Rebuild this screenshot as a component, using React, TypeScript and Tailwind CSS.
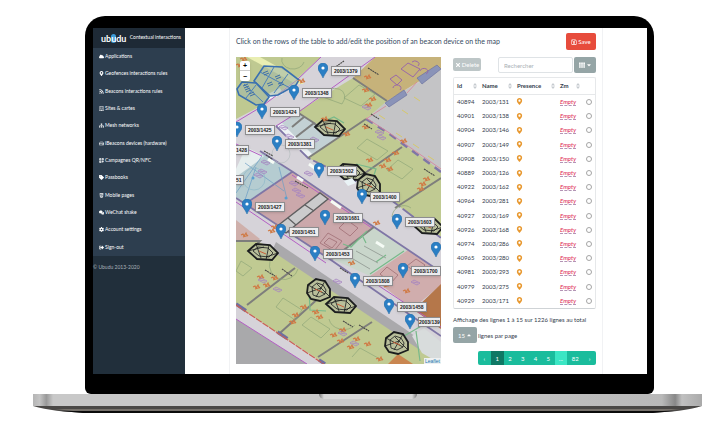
import React from 'react';
import {
  FaCaretDown,
  FaCaretUp,
  FaCloud,
  FaCog,
  FaComments,
  FaHtml5,
  FaMapMarkerAlt,
  FaQrcode,
  FaRegBuilding,
  FaRegHdd,
  FaRegSave,
  FaRss,
  FaSignOutAlt,
  FaSitemap,
  FaTag,
  FaTh,
  FaTimes,
} from 'react-icons/fa';

const menu = [
  { label: 'Applications', icon: <FaCloud /> },
  { label: 'Geofences interactions rules', icon: <FaMapMarkerAlt /> },
  { label: 'Beacons interactions rules', icon: <FaRss /> },
  { label: 'Sites & cartes', icon: <FaRegBuilding /> },
  { label: 'Mesh networks', icon: <FaSitemap /> },
  { label: 'iBeacons devices (hardware)', icon: <FaRegHdd /> },
  { label: 'Campagnes QR/NFC', icon: <FaQrcode /> },
  { label: 'Passbooks', icon: <FaTag /> },
  { label: 'Mobile pages', icon: <FaHtml5 /> },
  { label: 'WeChat shake', icon: <FaComments /> },
  { label: 'Account settings', icon: <FaCog /> },
  { label: 'Sign-out', icon: <FaSignOutAlt /> },
];

const beacons = [
  { id: '40894', name: '2003/131' },
  { id: '40901', name: '2003/138' },
  { id: '40904', name: '2003/146' },
  { id: '40907', name: '2003/149' },
  { id: '40908', name: '2003/150' },
  { id: '40889', name: '2003/126' },
  { id: '40922', name: '2003/162' },
  { id: '40964', name: '2003/281' },
  { id: '40927', name: '2003/169' },
  { id: '40926', name: '2003/168' },
  { id: '40974', name: '2003/286' },
  { id: '40965', name: '2003/280' },
  { id: '40981', name: '2003/293' },
  { id: '40979', name: '2003/275' },
  { id: '40929', name: '2003/171' },
];

// x / y is the centre of the pin's head on the floor plan
const pins = [
  { x: 87, y: 12, label: '2003/1379' },
  { x: 58, y: 34, label: '2003/1348' },
  { x: 26, y: 53, label: '2003/1424' },
  { x: 1, y: 71, label: '2003/1425' },
  { x: 41, y: 85, label: '2003/1381' },
  { x: 83, y: 112, label: '2003/1502' },
  { x: 126, y: 138, label: '2003/1400' },
  { x: 11, y: 148, label: '2003/1427' },
  { x: 89, y: 159, label: '2003/1681' },
  { x: 161, y: 163, label: '2003/1603' },
  { x: 45, y: 173, label: '2003/1451' },
  { x: 200, y: 191, label: '' },
  { x: 79, y: 195, label: '2003/1453' },
  { x: 167, y: 212, label: '2003/1700' },
  { x: 119, y: 222, label: '2003/1808' },
  { x: 153, y: 248, label: '2003/1458' },
  { x: 174, y: 263, label: '2003/139', edge: true },
];

// labels whose pin is left of the visible area
const edgeLabels = [
  { y: 88, label: '1428' },
  { y: 118, label: '51' },
];

const stairs = [
  { x: 94, y: 71, wide: true },
  { x: 114, y: 115, wide: true },
  { x: 133, y: 128, wide: false },
  { x: 192, y: 169, wide: true },
  { x: 27, y: 195, wide: true },
  { x: 83, y: 233, wide: false },
  { x: 105, y: 248, wide: true },
  { x: 161, y: 286, wide: false },
];

const notes = [
  [3, 8], [7, 2], [131, 20], [132, 48], [129, 33], [136, 42], [102, 12], [88, 62], [129, 70], [110, 77], [133, 103],
  [146, 109], [151, 103], [159, 96], [153, 112], [186, 127], [190, 122], [184, 132], [167, 84], [65, 24],
  [24, 220], [20, 230], [30, 228], [38, 221], [67, 250], [59, 258], [56, 265], [83, 260], [79, 255],
  [97, 278], [104, 284], [114, 290], [120, 282], [106, 273], [131, 287], [143, 302], [140, 166],
  [35, 174], [38, 170], [149, 228], [170, 234], [115, 206], [8, 178],
];

const violetNotes = [
  [29, 105], [26, 114], [22, 118], [57, 126], [60, 133], [64, 138], [53, 79], [47, 70], [26, 223], [41, 232],
  [101, 224], [179, 225], [106, 276], [118, 286], [72, 86], [78, 82], [72, 116], [143, 75], [145, 80], [130, 50],
];

const blueNotes = [[12, 33], [16, 37], [30, 16], [42, 20], [34, 27], [45, 27], [10, 29]];

function FloorPlan() {
  return (
    <svg className="block h-full w-full" viewBox="0 0 205 307" preserveAspectRatio="xMinYMin slice" aria-hidden="true">
      <rect width="205" height="307" fill="#d6d3d9" />

      {/* outside of the building */}
      <path d="M205 12 151 44 130 62 152 76 205 115Z" fill="#c4c4c6" />
      <path d="M0 262 71 307H0Z" fill="#a9a9ab" />

      {/* rooms */}
      <path d="M0 0H85L61 22 23 50 0 62Z" fill="#bfc991" />
      <path d="M139 0H205V11L151 44 117 21Z" fill="#c6b27a" />
      <path d="M117 21 151 44 130 62 102 81 61 55Z" fill="#c0ca92" />
      <path d="M61 55 102 80 72 101 40 69Z" fill="#c3d1d4" />
      <path d="M102 80 130 62 152 76 205 114V180L186 168 148 137 72 101Z" fill="#c0ca92" />
      <path d="M0 120 26 96 56 115 9 147 0 141Z" fill="#b5ccd1" />
      <path d="M56 115 138 170 95 203 9 147Z" fill="#cba8ab" />
      <path d="M138 170 172 193 134 219 96 202Z" fill="#c9d6cb" />
      <path d="M172 193 205 215V228L176 252 134 219Z" fill="#d0adad" />
      <path d="M205 227 178 253 205 272Z" fill="#b5774a" />
      <path d="M0 163 24 182 14 193 0 184Z" fill="#cfb0ab" />
      <path d="M0 184 20 184 42 193 169 280 205 307H89L0 248Z" fill="#c0ca92" />
      <path d="M40 185 169 272 205 298V307L169 283 36 194Z" fill="#aaa9ac" />
      <path d="M176 279 188 271 205 285V307L186 296Z" fill="#d8dcdc" />
      <path d="M152 307 162 297 177 307Z" fill="#c98650" />

      {/* light strips along the facade */}
      <path d="M11 0 24 0 62 21 68 27 60 27Z" fill="#e9eeb2" />
      <path d="M32 37 44 31 47 37 31 43Z" fill="#f3f7fa" />
      <path d="M40 70 46 66 76 97 72 101Z" fill="#eef3f5" />
      <path d="M10 90 28 99 22 104 0 120V112Z" fill="#e6eeee" />

      {/* corridor outlines */}
      <g fill="none" stroke="#7f76a6" strokeWidth="1.8">
        <path d="M24 94 57 115 138 170 205 215M0 141 95 203 180 262 205 279M9 147 56 115" />
        <path d="M130 62 152 76 205 115" strokeWidth="2.4" strokeDasharray="8 6" />
        <path d="M40 69 72 101 150 139 205 181" strokeDasharray="14 3" />
      </g>
      <g fill="none" stroke="#b45fc4" strokeWidth="1">
        <path d="M85 0 61 23 25 50 0 65M139 0 64 54 40 69M0 262 71 307" />
        <path d="M26 99 0 87M136 171 56 118M0 145 90 206M134 223 205 270" />
      </g>
      <path d="M61 120 67 124M95 144 105 151M73 107 83 114M140 185 148 190M32 102 38 106" stroke="#f5fbf5" strokeWidth="3" />

      {/* partition walls */}
      <g fill="none" stroke="#7e7e7c" strokeWidth="2">
        <path d="M117 21 151 44M130 62 72 101M122 121 166 90M159 151 205 121" />
        <path d="M11 248 59 211M44 276 86 238M82 300 136 265M0 184 24 184 14 194" />
        <path d="M61 55 78 66 60 80M68 60 56 70M78 66 84 72M138 170 96 202" />
      </g>
      <path d="M0 247 89 307" stroke="#6f6fa0" strokeWidth="3.5" strokeDasharray="12 38" />
      <path d="M0 248 89 308" stroke="#cb6055" strokeWidth="1.2" strokeDasharray="7 1" />
      <g fill="#8a93b8" stroke="#666d9c" strokeWidth=".6">
        <path d="M181 21 201 8 205 12 186 27Z" />
        <path d="M149 46 168 33 171 38 153 50Z" />
      </g>
      <path d="M130 62 150 49M171 36 181 25M130 61 152 75 205 112" fill="none" stroke="#d98297" strokeWidth=".8" />

      {/* lift shafts */}
      <path d="M40 170 84 136 92 142 50 176Z" fill="#cbcbcc" stroke="#5f5f60" strokeWidth="1.4" />
      <path d="M52 161 60 168M69 148 78 154" stroke="#5f5f60" strokeWidth="1.2" />

      {/* furniture */}
      <g fill="none" stroke="#8fa679" strokeWidth=".7">
        <path d="M84 39a14 10 -30 1 1 22 8ZM108 41 123 28 139 37 125 49ZM46 1a10 8 0 0 0 22 4M121 91 131 82 152 94 141 103Z" />
        <path d="M151 113 162 103 177 112 166 122ZM40 250 47 241 66 253 59 263ZM66 268 75 260 94 272 85 281Z" />
        <path d="M116 300 124 291 144 302M34 204a14 14 0 0 0 28 8M93 262a15 13 0 0 0 26 6M0 214 5 204 16 211 7 219Z" />
        <path d="M156 160a12 12 0 0 1 19-9" />
      </g>
      <g fill="none" stroke="#a06f75" strokeWidth=".8">
        <path d="M84 186 92 176 106 184 98 194ZM88 186 93 181 101 185 96 191ZM103 171 111 163 122 171 114 179Z" />
        <path d="M144 217 151 210 162 218 155 226ZM171 209 180 202 189 208 181 216Z" />
      </g>
      <g fill="none" stroke="#9a69a8" strokeWidth="1">
        <path d="M165 12 172 6 184 12 177 20ZM154 22 160 18 166 23 161 28ZM176 5a4 3 0 1 1 6 4M157 31a4 3 0 1 1 7 2M184 14a4 3 0 1 1 6 3" />
      </g>
      <path d="M0 136 26 99M9 106 48 134M9 143 20 110M43 110 51 142" fill="none" stroke="#6b9dc4" strokeWidth=".7" />
      <circle cx="18" cy="122" r="11" fill="none" stroke="#8fb9c9" strokeWidth=".7" />
      <circle cx="45" cy="97" r="9" fill="none" stroke="#b6bfc0" strokeWidth=".7" />
      <g fill="#5a9fd0">
        <circle cx="17" cy="121" r="1.5" />
        <circle cx="50" cy="141" r="1.5" />
      </g>
      <g fill="none" stroke="#78b98a" strokeWidth="1.2">
        <path d="M131 174 115 190 107 187M126 178 130 186M168 194 134 217M140 205 150 198M163 282 187 268M180 274 184 304" />
        <path d="M73 232 74 253 90 254M120 107 140 112 138 118M84 66 98 60 108 66" />
      </g>
      <path d="M120 194 142 206M112 199 134 212M128 189 150 201" stroke="#9aa39c" strokeWidth="1" />

      {/* selected stair wells */}
      <g fill="#a4b9a6" fillOpacity=".6" stroke="#3a70b0" strokeWidth="1.6">
        <path d="M18 24 28 9 46 10 63 23 60 28 42 38 34 39Z" />
        <path d="M1 32 6 25 20 26 33 40 28 47 20 48 3 38Z" />
      </g>
      <path d="M24 15 54 31M38 10 26 31M52 17 38 36M8 27 27 45M20 28 10 41" stroke="#4a80ba" strokeWidth="1" />
      <g stroke="#3f6fa8" strokeWidth="1">
        {blueNotes.map(([x, y]) => (
          <path key={`${x}-${y}`} d={`M${x - 3} ${y}l5-2M${x - 2} ${y + 2}l5-2`} />
        ))}
      </g>

      {stairs.map((s) => (
        <g key={`${s.x}-${s.y}`} transform={`translate(${s.x} ${s.y})`} fill="none" stroke="#1b1d1e">
          {s.wide ? (
            <>
              <path d="M-15-1-7-8 7-7 15 1 9 8-6 7Z" fill="#b9bf9b" strokeWidth="1.8" />
              <path d="M-10-1-5-5 5-4 10 1 6 5-4 4ZM-7-8-2 6M6-7 3 8M-15-1 1-5M15 1 3 5" strokeWidth=".8" />
            </>
          ) : (
            <>
              <path d="M-11-5-3-11 6-9 11-1 11 7 1 11-8 9-12 3Z" fill="#b9bf9b" strokeWidth="1.8" />
              <path d="M-7-3-2-7 4-5 7 0 6 4 0 7-6 5ZM-11-5 6 4M6-9-3 7M-12 3 2-2M11 7-2-6" strokeWidth=".8" />
            </>
          )}
          <path d="M-4-1 3 2" stroke="#c9603a" strokeWidth="1" />
        </g>
      ))}
      <path d="M108 124 116 121 120 126 112 129Z" fill="#eaf3f6" />

      <g stroke="#d07a45" strokeWidth="1.2" fill="none">
        {notes.map(([x, y]) => (
          <path key={`${x}-${y}`} d={`M${x - 3} ${y}l2-1 1 2 2-3 1 3 1-1M${x - 1} ${y + 2}l3-1`} />
        ))}
      </g>
      <g stroke="#a583c0" strokeWidth=".8" fill="none">
        {violetNotes.map(([x, y]) => (
          <path key={`${x}-${y}`} d={`M${x - 4} ${y}l3-2 6 3-3 2ZM${x - 2} ${y}l5 1`} />
        ))}
      </g>
      <path d="M132 11 143 18M98 11 108 4M135 57 143 62M128 67 136 72M28 94 37 99M30 98 36 102M59 124 72 131M29 213 39 219M46 212 56 219M107 264 117 270M123 268 133 274M188 112 199 119M104 211 112 216" stroke="#4a4a48" strokeWidth="1.1" strokeDasharray="2 .6" />
      <path d="M166 53 172 57M178 40 184 44M143 58 149 62M160 76 166 80M177 87 183 91M192 99 198 103" stroke="#d6c86a" strokeWidth="1" />
    </svg>
  );
}

function Pin({ x, y, label, edge }: { x: number; y: number; label: string; edge?: boolean }) {
  return (
    <div className="absolute" style={{ left: x - 5, top: y - 6 }}>
      <svg className="block h-[15px] w-[10px]" viewBox="0 0 10 15" aria-hidden="true">
        <path d="M5 0a5 5 0 0 0-5 5c0 3 3 5 5 10 2-5 5-7 5-10a5 5 0 0 0-5-5Z" fill="#2b7fc4" stroke="#2369a5" strokeWidth=".5" />
        <circle cx="5" cy="5" r="1.6" fill="#fff" />
      </svg>
      {label && (
        <span
          className={`absolute top-[3px] left-[13px] flex h-2.5 items-center border border-[#8d8d8f] bg-[#ececee] font-['Liberation_Sans',sans-serif] text-[5px] leading-none font-bold text-[#222] shadow-sm ${
            edge ? 'border-r-0' : 'px-[2px]'
          }`}
        >
          {label}
        </span>
      )}
    </div>
  );
}

function Sidebar() {
  return (
    <aside className="flex w-[92px] shrink-0 flex-col bg-[#212f3b] text-[5px] text-white">
      <header className="flex h-5 items-center justify-between bg-[#1e2a36] pr-1 pl-2">
        <a href="#" className="flex items-center text-[9px] leading-none font-bold" aria-label="ubudu">
          ub<span className="rounded-full bg-[#3d9bd8]">u</span>du
        </a>
        <span className="whitespace-nowrap">Contextual interactions</span>
      </header>
      <nav className="grid h-[208px] auto-rows-fr bg-[#2d3e4f]">
        {menu.map((m) => (
          <a key={m.label} href="#" className="flex items-center gap-px pl-1.5 whitespace-nowrap">
            {m.icon}
            {m.label}
          </a>
        ))}
      </nav>
      <p className="mt-1.5 leading-[10px] text-[#a9b2ba]">© Ubudu 2013-2020</p>
    </aside>
  );
}

function SortIcon() {
  return (
    <svg className="h-[6px] w-1" viewBox="0 0 4 6" fill="#c5cacf" aria-hidden="true">
      <path d="M2 0 4 2.5H0ZM2 6 0 3.5h4Z" />
    </svg>
  );
}

function HeadCell({ label }: { label: string }) {
  return (
    <th className="p-0 pr-[2px] pl-[3px]">
      <div className="flex items-center justify-between">
        {label}
        <SortIcon />
      </div>
    </th>
  );
}

function BeaconTable() {
  return (
    <div className="mt-1 rounded-xs border border-[#e6e8ea] border-b-[#cfd3d6]">
      <table className="h-[230px] w-full table-fixed border-collapse text-left text-[6px] leading-none text-[#34404c]">
        <colgroup>
          <col className="w-[25px]" />
          <col className="w-[35px]" />
          <col className="w-[43px]" />
          <col className="w-[25px]" />
          <col />
        </colgroup>
        <thead>
          <tr className="h-4 border-b border-[#e6e8ea]">
            <HeadCell label="Id" />
            <HeadCell label="Name" />
            <HeadCell label="Presence" />
            <HeadCell label="Zm" />
            <th className="p-0" aria-label="Select" />
          </tr>
        </thead>
        <tbody>
          {beacons.map((b) => (
            <tr key={b.id}>
              <td className="p-0 pl-[3px]">{b.id}</td>
              <td className="p-0 pl-[3px]">{b.name}</td>
              <td className="p-0 pl-[2px]">
                <FaMapMarkerAlt className="text-[7px] text-[#e8982f]" />
              </td>
              <td className="p-0 pl-[3px]">
                <a href="#" className="border-b border-dashed border-[#b394b5] text-[#dd2551] italic">
                  Empty
                </a>
              </td>
              <td className="p-0 pl-1">
                <input
                  type="radio"
                  name="beacon"
                  aria-label={b.name}
                  className="block h-[6px] w-[6px] appearance-none rounded-full border border-[#a5a5a5] bg-white"
                />
              </td>
            </tr>
          ))}
        </tbody>
      </table>
    </div>
  );
}

function Pagination() {
  return (
    <nav className="mt-2 ml-auto flex h-3.5 w-[118px] overflow-hidden rounded-xs bg-[#1abc9c] text-[6px] text-white">
      <button className="flex-1" aria-label="Previous">‹</button>
      <button className="flex-1 bg-[#0f7864]">1</button>
      <button className="flex-1">2</button>
      <button className="flex-1">3</button>
      <button className="flex-1">4</button>
      <button className="flex-1">5</button>
      <button className="flex-1 bg-[#3be6c4]">...</button>
      <button className="w-4">82</button>
      <button className="flex-1" aria-label="Next">›</button>
    </nav>
  );
}

export default function App() {
  return (
    <div className="min-h-screen bg-white pt-4 font-[Lato,sans-serif]">
      {/* Screen */}
      <div className="mr-[69px] ml-[85px] rounded-t-[20px] rounded-b-md bg-black pt-3 pr-[7px] pb-5 pl-2">
        <div className="flex bg-white">
          <Sidebar />
          <div className="flex-1 pr-11 pl-11">
            <main className="border-x border-[#f1f2f4] px-1.5 pt-[5px] pb-[9px]">
              <div className="flex h-[17px] items-center justify-between">
                <h1 className="text-[7px] text-[#34495e]">
                  Click on the rows of the table to add/edit the position of an beacon device on the map
                </h1>
                <button className="flex h-full w-[30px] items-center justify-center gap-px rounded-xs bg-[#e74c3c] text-[6px] text-white">
                  <FaRegSave /> Save
                </button>
              </div>

              <div className="mt-[7px] flex gap-3">
                <section className="relative h-[307px] flex-1 overflow-hidden">
                  <FloorPlan />
                  {pins.map((p) => (
                    <Pin key={`${p.x}-${p.y}`} {...p} />
                  ))}
                  {edgeLabels.map((l) => (
                    <span
                      key={l.label}
                      className="absolute left-0 flex h-2.5 items-center border border-l-0 border-[#8d8d8f] bg-[#ececee] pr-px font-['Liberation_Sans',sans-serif] text-[5px] leading-none font-bold text-[#222] shadow-sm"
                      style={{ top: l.y }}
                    >
                      {l.label}
                    </span>
                  ))}
                  <div className="absolute top-1 left-1 flex w-2.5 flex-col divide-y divide-[#ccc] rounded-xs bg-white text-center font-['Liberation_Sans',sans-serif] text-[7px] leading-none font-bold text-black shadow">
                    <button className="h-2.5" aria-label="Zoom in">+</button>
                    <button className="h-2.5" aria-label="Zoom out">−</button>
                  </div>
                  <a href="#" className="absolute right-0 bottom-0 bg-[#eef0f1] px-px font-['Liberation_Sans',sans-serif] text-[5px] leading-[6px] text-[#1a78b0]">
                    Leaflet
                  </a>
                </section>

                <section className="w-[143px] shrink-0 text-[#34404c]">
                  <div className="flex h-4">
                    <button className="mt-px flex h-[13px] w-7 items-center justify-center gap-px rounded-xs bg-[#bdc6c7] text-[6px] text-white">
                      <FaTimes /> Delete
                    </button>
                    <input
                      type="search"
                      aria-label="Rechercher"
                      placeholder="Rechercher"
                      className="ml-auto w-[75px] rounded-xs border border-[#dfe3e6] px-[5px] text-[6px] placeholder:text-[#a9afb5]"
                    />
                    <button className="ml-px flex w-[22px] items-center justify-center gap-px rounded-xs bg-[#95a5a6] text-[6px] text-white" aria-label="Columns">
                      <FaTh /> <FaCaretDown />
                    </button>
                  </div>

                  <BeaconTable />

                  <p className="mt-1.5 text-[6px] leading-[10px] whitespace-nowrap">
                    Affichage des lignes 1 à 15 sur 1226 lignes au total
                  </p>
                  <div className="mt-0.5 flex h-4 items-center gap-px text-[6px]">
                    <button className="flex h-full w-6 items-center justify-center gap-px rounded-xs bg-[#95a5a6] text-white">
                      15 <FaCaretUp />
                    </button>
                    <span>lignes par page</span>
                  </div>
                  <Pagination />
                </section>
              </div>
            </main>
          </div>
        </div>
      </div>

      {/* Laptop base */}
      <div className="mr-[21px] ml-[33px]">
        <div className="flex h-3 justify-center bg-[linear-gradient(to_right,#b5b5b5_0,#c4c4c4_1%,#999_2%,#c8c8c8_3%,#c8c8c8_50%,#b9b9b9_94%,#888_96%,#c0c0c0_97%,#aaa_100%)]">
          <div className="h-[5px] w-[98px] rounded-b-md bg-[linear-gradient(to_right,#777_0,#d6d6d6_5%,#d6d6d6_95%,#777_100%)]" />
        </div>
        <svg className="block h-[7px] w-full" viewBox="0 0 669 7" preserveAspectRatio="none" aria-hidden="true">
          <path d="M0 0H669C655 4 640 6 615 7H55C30 6 15 4 0 0Z" fill="#4a4846" />
          <path d="M22 3H647L630 5H40Z" fill="#77726c" />
          <path d="M28 5H641L620 7H50Z" fill="#0b0b0b" />
        </svg>
      </div>
    </div>
  );
}
